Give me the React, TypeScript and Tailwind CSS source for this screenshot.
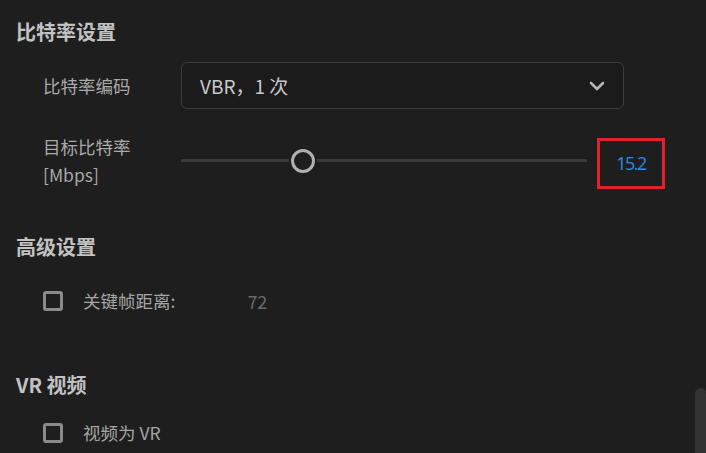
import React from "react";

const font = { fontFamily: '"Noto Sans CJK SC", "Noto Sans", sans-serif' };

function Heading({ children }: { children: React.ReactNode }) {
  return <div className="h-[24px] text-[20px] leading-[24px] font-bold text-[#c2c2c2]">{children}</div>;
}

function Check({ label, value }: { label: string; value?: string }) {
  return (
    <div className="flex items-center h-[24px] pl-[27px]">
      <div className="w-[20px] h-[20px] rounded-[3px] border-[3px] border-[#8a8a8a]" />
      <span className="ml-[20px] text-[17.5px] leading-[24px] text-[#a5a5a5]">{label}</span>
      {value && <span className="ml-[72px] text-[18px] leading-[24px] text-[#6a6a6a]">{value}</span>}
    </div>
  );
}

export default function App() {
  return (
    <div className="relative w-[706px] h-[453px] overflow-hidden bg-[#1e1e1e] pl-[16px] pt-[20px]" style={font}>
      <Heading>比特率设置</Heading>

      <div className="mt-[18px] flex items-center">
        <div className="w-[165px] pl-[27px] text-[17.5px] text-[#a9a9a9] leading-[24px]">比特率编码</div>
        <div className="w-[443px] h-[47px] rounded-[6px] border border-[#3c3c3c] bg-[#1b1b1b] flex items-center justify-between pl-[18px] pr-[18px]">
          <span className="text-[19px] text-[#c8c8c8] leading-[24px]">VBR，1 次</span>
          <svg width="16" height="10" viewBox="0 0 16 10">
            <path d="M2 2 L8 8 L14 2" fill="none" stroke="#b4b4b4" strokeWidth="2.6" strokeLinecap="round" strokeLinejoin="round" />
          </svg>
        </div>
      </div>

      <div className="mt-[29px] flex items-start">
        <div className="w-[165px] pl-[27px] text-[17.5px] text-[#a9a9a9] leading-[28px]">
          <div className="-mt-[5px]">目标比特率</div>
          <div>[Mbps]</div>
        </div>
        <div className="relative w-[406px] h-[51px] flex items-center">
          <div className="absolute left-0 top-[21px] w-[108px] h-[3px] bg-[#3a3a3a]" />
          <div className="absolute left-[136px] top-[21px] right-0 h-[3px] bg-[#3a3a3a]" />
          <div className="absolute left-[110px] top-[11px] w-[24px] h-[24px] rounded-full border-[3px] border-[#b0b0b0] bg-[#1e1e1e]" />
        </div>
        <div className="ml-[10px] w-[68px] h-[51px] border-[3px] border-[#e5202a] flex items-center justify-center">
          <span className="text-[18px] text-[#2f8ae6] tracking-[-1.5px]" style={{ fontFamily: '"Open Sans", sans-serif' }}>15.2</span>
        </div>
      </div>

      <div className="mt-[46px]">
        <Heading>高级设置</Heading>
      </div>
      <div className="mt-[30px]">
        <Check label="关键帧距离:" value="72" />
      </div>

      <div className="mt-[60px]">
        <Heading>VR 视频</Heading>
      </div>
      <div className="mt-[24px]">
        <Check label="视频为 VR" />
      </div>

      <div className="absolute right-0 top-[388px] w-[11px] h-[80px] rounded-t-[6px] bg-[#333333]" />
    </div>
  );
}
